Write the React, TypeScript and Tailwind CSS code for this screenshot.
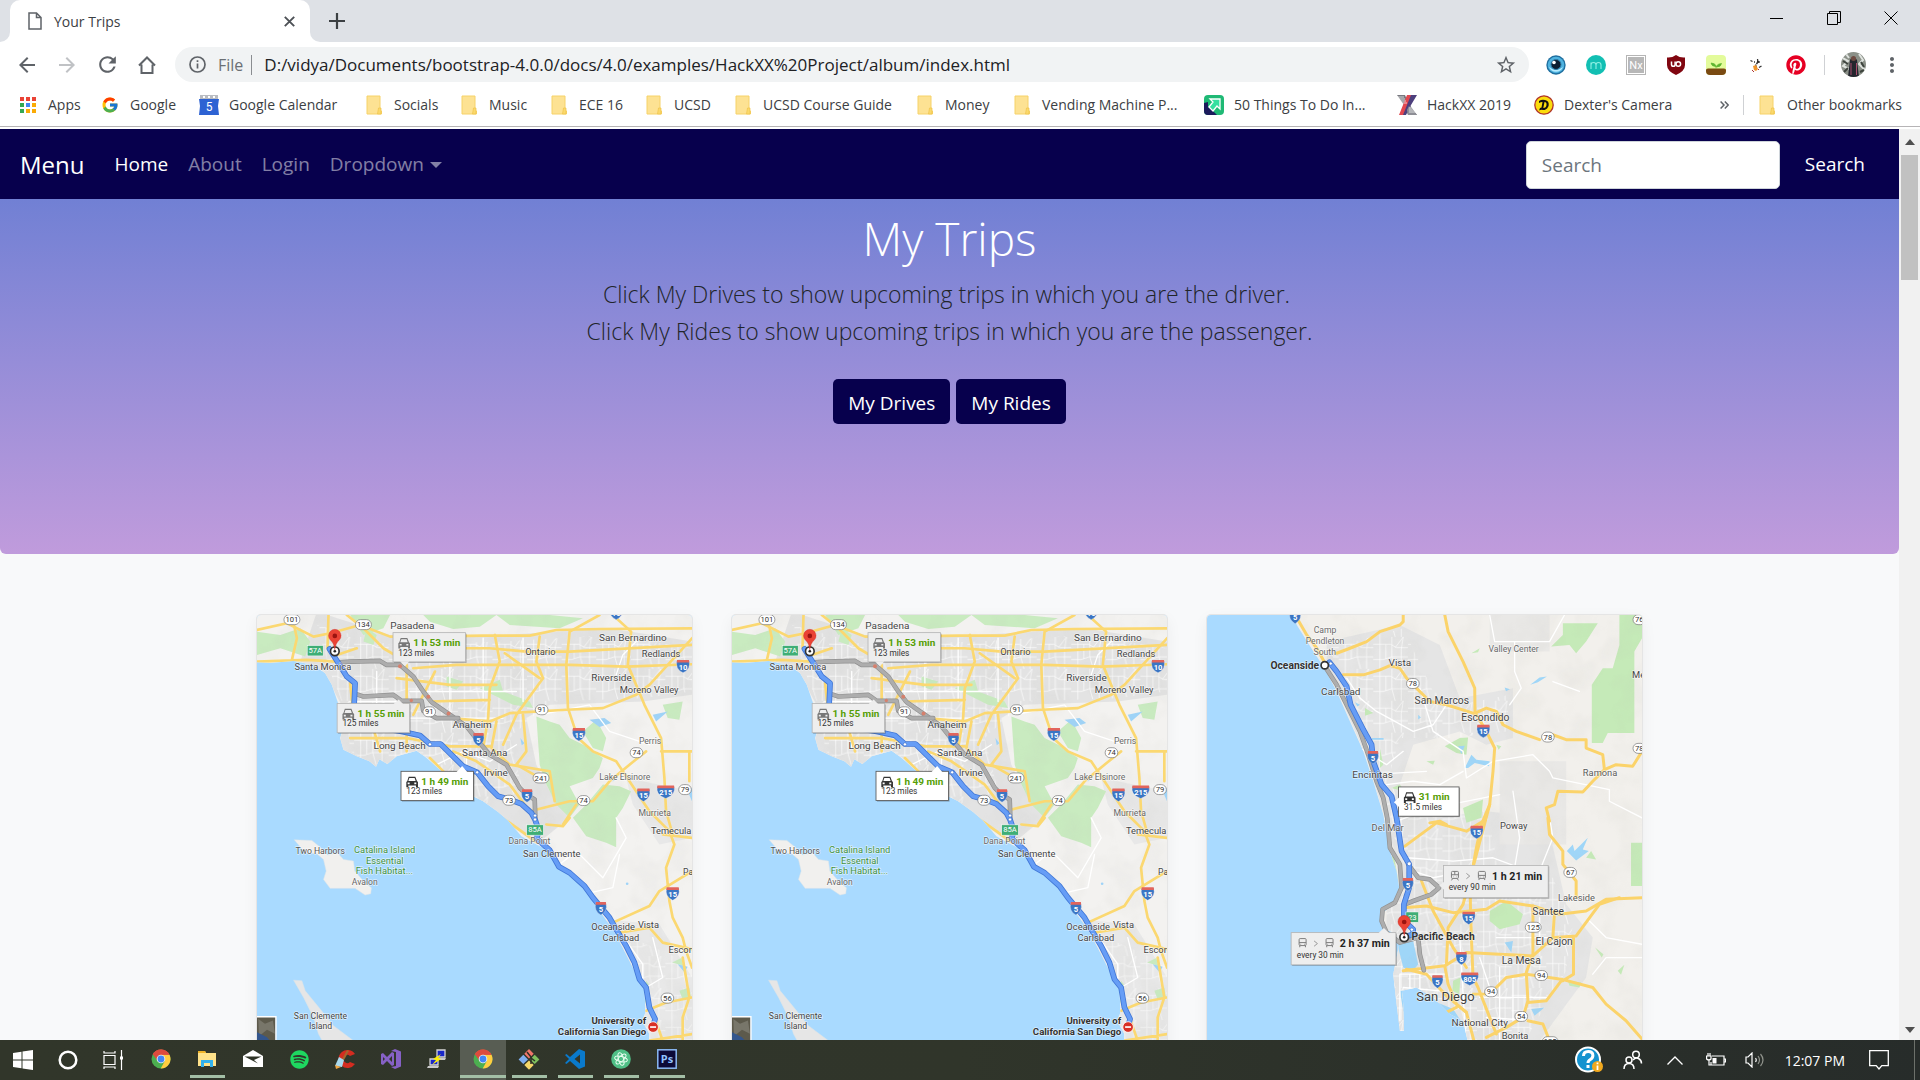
import type { ReactNode } from "react";
import { FcGoogle } from "react-icons/fc";
import { FaPinterest, FaSpotify } from "react-icons/fa";
import { MdArrowBack, MdArrowForward, MdRefresh, MdMoreVert, MdStarBorder } from "react-icons/md";

/* ---------- Browser icons ---------- */

function FolderIcon() {
  return (
    <svg width="20" height="20" viewBox="0 0 20 20" aria-hidden="true">
      <path d="M3 1h13v14l1.5 1v3H3z" fill="#fde293" stroke="#f6d268" strokeWidth="1" />
      <path d="M14.5 13h2.5v6h-3.5z" fill="#fbd96c" stroke="#efc34a" strokeWidth=".7" />
    </svg>
  );
}

function AppsIcon() {
  const colors = ["#ea4335", "#ea4335", "#ea4335", "#34a853", "#4285f4", "#fbab05", "#34a853", "#fbab05", "#fbab05"];
  return (
    <svg width="20" height="20" viewBox="0 0 20 20" aria-hidden="true">
      {colors.map((c, i) => (
        <rect key={i} x={2 + (i % 3) * 6} y={2 + Math.floor(i / 3) * 6} width="4" height="4" fill={c} />
      ))}
    </svg>
  );
}

function CalendarIcon() {
  return (
    <svg width="20" height="20" viewBox="0 0 20 20" aria-hidden="true">
      <path d="M1 0h18v5H1z" fill="#b9bcc2" />
      <path d="M4 1h2v2H4zM9 1h2v2H9zM14 1h2v2h-2z" fill="#fff" />
      <path d="M0 4h20l-1 7 1 9H0l1-9z" fill="#2d62d3" />
      <text x="10" y="16" fontSize="12" fill="#fff" textAnchor="middle" fontFamily="Roboto, sans-serif">5</text>
    </svg>
  );
}

function ThingsIcon() {
  return (
    <svg width="20" height="20" viewBox="0 0 20 20" aria-hidden="true">
      <rect width="20" height="20" rx="4" fill="#1fb975" />
      <path d="M0 8l4-1v5l5 4 4 4H4a4 4 0 0 1-4-4z" fill="#1c1a5c" />
      <path d="M6 4h10v10l-3-3-4 5-4-4 4-5z" fill="#35e0a0" stroke="#fff" strokeWidth="1.3" />
    </svg>
  );
}

function HackIcon() {
  return (
    <svg width="20" height="20" viewBox="0 0 20 20" aria-hidden="true">
      <path d="M0 0h8l4 9 8 11h-9L7 10z" fill="#77787f" />
      <path d="M13 0h7l-6 10-5 10H3l6-10z" fill="#4d3f7d" />
      <path d="M10 0h4L6 20H2z" fill="#e2474f" />
      <path d="M12 11l8 9h-9l-1-5z" fill="#8e8f96" />
      <path d="M0 2h7M1 4h7M2 6h7M3 8h7M12 13h4M12 15h6M12 17h7" stroke="#fff" strokeWidth=".7" />
    </svg>
  );
}

function DexterIcon() {
  return (
    <svg width="20" height="20" viewBox="0 0 20 20" aria-hidden="true">
      <circle cx="10" cy="10" r="9.200" fill="#fbdc0b" stroke="#b0342b" strokeWidth="1.300" />
      <path d="M5 6q3-2 6-1c3 .5 4 2.500 3.700 5S12 15.500 9 15q-2-.5-4 .5l1-2.500 1.500-.5L8.500 7Q7 6.800 5 8zM10.500 7L9.300 13c2 0 3-1 3.200-3s-.5-3-2-3z" fill="#111" fillRule="evenodd" />
    </svg>
  );
}

function ChromeIcon() {
  return (
    <svg width="20" height="20" viewBox="0 0 20 20" aria-hidden="true">
      <circle cx="10" cy="10" r="9.500" fill="#4caf50" />
      <path d="M10 10L1.770 5.250A9.500 9.500 0 0 1 18.230 5.250z" fill="#dd4b3e" />
      <path d="M10 5.700h8.500A9.500 9.500 0 0 1 9.700 19.500l4-7.300z" fill="#ffcd40" />
      <path d="M1.770 5.250A9.500 9.500 0 0 1 18.500 5.700H10L6 11z" fill="#dd4b3e" />
      <circle cx="10" cy="10" r="4.300" fill="#f1f1f1" />
      <circle cx="10" cy="10" r="3.400" fill="#4286f5" />
    </svg>
  );
}

const bookmarks: { label: string; icon: ReactNode; width: string }[] = [
  { label: "Apps", icon: <AppsIcon />, width: "w-[82px]" },
  { label: "Google", icon: <FcGoogle size={18} />, width: "w-[99px]" },
  { label: "Google Calendar", icon: <CalendarIcon />, width: "w-[165px]" },
  { label: "Socials", icon: <FolderIcon />, width: "w-[95px]" },
  { label: "Music", icon: <FolderIcon />, width: "w-[90px]" },
  { label: "ECE 16", icon: <FolderIcon />, width: "w-[95px]" },
  { label: "UCSD", icon: <FolderIcon />, width: "w-[89px]" },
  { label: "UCSD Course Guide", icon: <FolderIcon />, width: "w-[182px]" },
  { label: "Money", icon: <FolderIcon />, width: "w-[97px]" },
  { label: "Vending Machine P...", icon: <FolderIcon />, width: "w-[192px]" },
  { label: "50 Things To Do In...", icon: <ThingsIcon />, width: "w-[193px]" },
  { label: "HackXX 2019", icon: <HackIcon />, width: "w-[137px]" },
  { label: "Dexter's Camera", icon: <DexterIcon />, width: "w-[140px]" },
];

const extensions: { name: string; icon: ReactNode }[] = [
  {
    name: "Eye",
    icon: (
      <svg width="20" height="20" viewBox="0 0 20 20">
        <circle cx="10" cy="10" r="9.700" fill="#1f6f9f" />
        <circle cx="10" cy="10" r="8.300" fill="#4fb3e0" />
        <path d="M3 12a7.500 7.500 0 0 0 14 0q-7 6-14 0z" fill="#b5ecff" />
        <circle cx="10" cy="9.500" r="5" fill="#0c1f33" />
        <circle cx="10" cy="9.500" r="5" fill="none" stroke="#2d7ca8" strokeWidth="1" />
        <circle cx="8" cy="7.500" r="1.800" fill="#fff" />
      </svg>
    ),
  },
  {
    name: "Momentum",
    icon: (
      <svg width="20" height="20" viewBox="0 0 20 20">
        <circle cx="10" cy="10" r="10" fill="#12bfb3" />
        <path d="M5 14V7.500M5 10q0-2.500 2.500-2.500T10 10v4M10 10q0-2.500 2.500-2.500T15 10v4" stroke="#8df0e4" fill="none" strokeWidth="1.100" />
      </svg>
    ),
  },
  {
    name: "Nx",
    icon: (
      <svg width="20" height="20" viewBox="0 0 20 20">
        <rect x=".5" y=".5" width="19" height="19" fill="#fff" stroke="#b5b5b5" />
        <rect x="2" y="2" width="16" height="16" fill="#b7b7b7" />
        <text x="10" y="14" fontSize="11" fill="#fff" textAnchor="middle" fontFamily="Roboto, sans-serif">Nx</text>
      </svg>
    ),
  },
  {
    name: "uBlock",
    icon: (
      <svg width="20" height="20" viewBox="0 0 20 20">
        <path d="M10 0q4 3 9 2.500V10q0 6-9 10Q1 16 1 10V2.500Q6 3 10 0z" fill="#800610" />
        <path d="M5.500 6.500v3q0 1.800 1.800 1.800t1.800-1.800V6.500" stroke="#fff" fill="none" strokeWidth="1.500" />
        <circle cx="12.300" cy="9" r="2.300" stroke="#fff" fill="none" strokeWidth="1.500" />
      </svg>
    ),
  },
  {
    name: "Forest",
    icon: (
      <svg width="20" height="20" viewBox="0 0 20 20">
        <rect width="20" height="20" rx="4" fill="#e3fb9b" />
        <path d="M0 15q0-1.500 2-1.500h16q2 0 2 1.500v1q0 4-4 4H4q-4 0-4-4z" fill="#7a4a12" />
        <path d="M10 13.500V11M10 11.500q-4.500 0-5-3.500 4.500 0 5 3.500zM10.500 12q0-3 5-3.500-.5 3.500-5 3.500z" fill="#5fb531" stroke="#5fb531" strokeWidth=".7" />
      </svg>
    ),
  },
  {
    name: "Fox",
    icon: (
      <svg width="20" height="20" viewBox="0 0 20 20">
        <path d="M4.500 5.500l2 1M11.500 4l.5 3-1.500 2M9.500 9.500l1 4M13 12.500l2.500-1.500M13 6v2M8 7h1" stroke="#333" strokeWidth="1.300" />
        <path d="M7 11l3-1 2 4-2 2-2-1z" fill="#f0952b" />
        <path d="M6 15l2 2M12 14l1 1" stroke="#a33" strokeWidth="1" />
      </svg>
    ),
  },
  { name: "Pinterest", icon: <FaPinterest size={20} color="#e60023" /> },
];

const iconButton = "flex h-10 w-10 shrink-0 items-center justify-center text-[#5f6368]";

function BrowserChrome() {
  return (
    <header className="shrink-0 bg-white">
      <div className="flex h-[42px] items-end bg-[#dee1e6]">
        <div className="h-[10px] w-[10px] bg-white">
          <div className="h-full w-full rounded-br-[10px] bg-[#dee1e6]" />
        </div>
        <div className="flex h-full w-[300px] items-center rounded-t-[10px] bg-white pr-3 pl-[18px]">
          <svg width="14" height="18" viewBox="0 0 14 18" fill="none" stroke="#5f6368" strokeWidth="1.500" aria-hidden="true">
            <path d="M1 1h7.500L13 5.500V17H1zM8.500 1v4.500H13" />
          </svg>
          <span className="ml-3 flex-1 text-[14px] text-[#3c4043]">Your Trips</span>
          <button aria-label="Close tab" className="p-[3px]">
            <svg width="11" height="11" viewBox="0 0 11 11" stroke="#4d5156" strokeWidth="1.900">
              <path d="M.8.8l9.400 9.400M10.200.8L.8 10.200" />
            </svg>
          </button>
        </div>
        <div className="h-[10px] w-[10px] bg-white">
          <div className="h-full w-full rounded-bl-[10px] bg-[#dee1e6]" />
        </div>
        <button aria-label="New tab" className="flex h-full w-[34px] items-center justify-center">
          <svg width="16" height="16" viewBox="0 0 16 16" stroke="#3c4043" strokeWidth="2.200">
            <path d="M8 0v16M0 8h16" />
          </svg>
        </button>
        <div className="mr-px ml-auto flex h-9 self-start">
          <button aria-label="Minimize" className="flex w-[57px] items-center justify-center">
            <svg width="13" height="13" viewBox="0 0 13 13" stroke="#000"><path d="M0 6.500h13" /></svg>
          </button>
          <button aria-label="Restore" className="flex w-[57px] items-center justify-center">
            <svg width="14" height="14" viewBox="0 0 14 14" stroke="#000" fill="none"><path d="M.5 2.500h10v11H.5zM2.500 2.500v-2h11v11h-3" /></svg>
          </button>
          <button aria-label="Close" className="flex w-[57px] items-center justify-center">
            <svg width="14" height="14" viewBox="0 0 14 14" stroke="#000"><path d="M.5.5l13 13M13.500.5l-13 13" /></svg>
          </button>
        </div>
      </div>

      <div className="flex h-[45px] items-center pl-[7px]">
        <button aria-label="Back" className={iconButton}><MdArrowBack size={24} /></button>
        <button aria-label="Forward" className="flex h-10 w-10 shrink-0 items-center justify-center text-[#c0c2c5]"><MdArrowForward size={24} /></button>
        <button aria-label="Reload" className={iconButton}><MdRefresh size={25} /></button>
        <button aria-label="Home" className={iconButton}>
          <svg width="18" height="18" viewBox="0 0 18 18" fill="none" stroke="#5f6368" strokeWidth="2">
            <path d="M1 9.500L9 1.500l8 8M3.500 8.500V17h11V8.500" />
          </svg>
        </button>
        <div className="ml-2 flex h-[35px] flex-1 items-center rounded-full bg-[#f1f3f4] pr-3 pl-[14px]">
          <svg width="17" height="17" viewBox="0 0 17 17" fill="none" stroke="#5f6368" strokeWidth="1.700" aria-hidden="true">
            <circle cx="8.500" cy="8.500" r="7.500" />
            <path d="M8.500 7.500v5M8.500 4.300v1.700" />
          </svg>
          <span className="ml-3 text-[16px] text-[#6b6f74]">File</span>
          <span className="ml-2 h-5 w-px bg-[#8a8d91]" />
          <input aria-label="Address" className="ml-3 min-w-0 flex-1 bg-transparent text-[17px] text-[#202124] outline-none" defaultValue="D:/vidya/Documents/bootstrap-4.0.0/docs/4.0/examples/HackXX%20Project/album/index.html" />
          <button aria-label="Bookmark this page" className="text-[#5f6368]"><MdStarBorder size={22} /></button>
        </div>
        <div className="ml-[7px] flex">
          {extensions.map((e) => (
            <button key={e.name} aria-label={e.name} className={iconButton}>{e.icon}</button>
          ))}
        </div>
        <span className="ml-2 h-5 w-px bg-[#cfd1d4]" />
        <button aria-label="Profile" className="ml-4">
          <svg width="25" height="25" viewBox="0 0 25 25">
            <clipPath id="avatar"><circle cx="12.500" cy="12.500" r="12.500" /></clipPath>
            <g clipPath="url(#avatar)">
              <rect width="25" height="25" fill="#8b9088" />
              <path d="M0 5l7 4-5 5 6 3M18 2l4 6-4 4 6 6M5 2l3 4" stroke="#dfe3df" strokeWidth="2" fill="none" />
              <path d="M2 9l5 3M20 10l3 5M3 20l4-4M19 20l4-2" stroke="#3e443e" strokeWidth="2" />
              <path d="M9 8q3-6 7 0l2 17H7z" fill="#24252e" />
              <circle cx="12.500" cy="6.500" r="2.500" fill="#6f4b42" />
              <path d="M10 11v12M15.500 11v12" stroke="#a84d6d" />
            </g>
          </svg>
        </button>
        <button aria-label="Menu" className="mr-2 ml-[6px] flex w-10 justify-center text-[#5f6368]"><MdMoreVert size={24} /></button>
      </div>

      <nav aria-label="Bookmarks" className="flex h-[40px] items-start border-b border-[#b6b4b6] px-[18px] text-[14px] text-[#3c4043]">
        {bookmarks.map((b) => (
          <a key={b.label} href="#" className={`${b.width} flex h-[35px] shrink-0 items-center gap-[10px] whitespace-nowrap`}>
            <span className="flex w-5 shrink-0 justify-center">{b.icon}</span>
            {b.label}
          </a>
        ))}
        <div className="ml-auto flex h-[35px] items-center">
          <button aria-label="More bookmarks" className="mr-[14px]">
            <svg width="9" height="8" viewBox="0 0 9 8" fill="none" stroke="#5f6368" strokeWidth="1.500"><path d="M.6.5L4 4 .6 7.500M4.800.5L8.200 4 4.800 7.500" /></svg>
          </button>
          <span className="mr-[13px] h-5 w-px bg-[#cfd1d4]" />
          <a href="#" className="flex items-center gap-[10px] whitespace-nowrap"><FolderIcon />Other bookmarks</a>
        </div>
      </nav>
      <div className="h-[2px] bg-white" />
    </header>
  );
}

/* ---------- Map pieces; map units are a third of a CSS pixel ---------- */

type Point = { x: number; y: number };

function Interstate({ x, y, n }: Point & { n: string }) {
  const w = n.length > 2 ? 28 : n.length > 1 ? 21 : 18;
  return (
    <g transform={`translate(${x} ${y})`}>
      <path d={`M${-w + 3} -17H${w - 3}Q${w + 4} 8 0 20Q${-w - 4} 8 ${-w + 3} -17z`} fill="#3a75c4" stroke="#e9eef5" strokeWidth="1" />
      <path d={`M${-w + 3} -19H${w - 3}L${w - 2} -11H${-w + 2}z`} fill="#e2645c" />
      <text y="10" fontSize="23" fontWeight="700" fill="#fff" textAnchor="middle">{n}</text>
    </g>
  );
}

function StateRoute({ x, y, n }: Point & { n: string }) {
  const w = n.length > 2 ? 24 : 19;
  return (
    <g transform={`translate(${x} ${y})`}>
      <rect x={-w} y="-15" width={w * 2} height="30" rx="15" fill="#fff" stroke="#707070" strokeWidth="2" />
      <text y="8" fontSize="23" fill="#333" textAnchor="middle">{n}</text>
    </g>
  );
}

function Place({ x, y, children, size = 28, color = "#454545", bold = false, anchor = "middle" }: Point & { children: string; size?: number; color?: string; bold?: boolean; anchor?: "start" | "middle" | "end" }) {
  return (
    <text x={x} y={y} fontSize={size} fontWeight={bold ? 700 : 400} fill={color} textAnchor={anchor} stroke="#ffffff" strokeOpacity=".6" strokeWidth="4" paintOrder="stroke" strokeLinejoin="round">
      {children}
    </text>
  );
}

function Car({ x, y, color }: Point & { color: string }) {
  return (
    <path
      transform={`translate(${x} ${y})`}
      fill={color}
      fillRule="evenodd"
      d="M7 0h20l5 13 3 3v16h-6v-5H6v5H0V16l3-3zM9 4L6 13h22l-3-9zM4 18v5h6v-5zM24 18v5h6v-5z"
    />
  );
}

function Bus({ x, y, train = false }: Point & { train?: boolean }) {
  return (
    <g transform={`translate(${x} ${y})`} fill="none" stroke="#7d7d7d" strokeWidth="3">
      <rect x="2" y="1" width="21" height="21" rx="3" />
      <path d={train ? "M2 11h21M12 1v10M6 22l-4 6M19 22l4 6M8 17h1M16 17h1" : "M2 13h21M4 22v5M21 22v5M6 18h2M17 18h2"} />
    </g>
  );
}

function Callout({ x, y, w, h, tail, main, children }: Point & { w: number; h: number; tail: string; main?: boolean; children: ReactNode }) {
  return (
    <g>
      <rect x={x + 3} y={y + 3} width={w} height={h} fill="#000" opacity=".28" />
      <rect x={x} y={y} width={w} height={h} fill={main ? "#fff" : "#eeeeee"} stroke={main ? "#555" : "#b5b5b5"} strokeWidth="2.500" />
      <path d={tail} fill={main ? "#fff" : "#eeeeee"} />
      {children}
    </g>
  );
}

function DriveCallout({ x, y, w = 218, tail, main, time, miles }: Point & { w?: number; tail: string; main?: boolean; time: string; miles: string }) {
  return (
    <Callout x={x} y={y} w={w} h={88} tail={tail} main={main}>
      <Car x={x + 16} y={y + 16} color={main ? "#333" : "#777"} />
      <text x={x + 61} y={y + 40} fontSize="30" fontWeight="700" fill="#559e05">{time}</text>
      <text x={x + 16} y={y + 69} fontSize="25" fill="#333">{miles}</text>
    </Callout>
  );
}

function Exit({ x, y, w, n }: Point & { w: number; n: string }) {
  return (
    <g>
      <rect x={x} y={y} width={w} height="31" fill="#3fae76" stroke="#fff" strokeWidth="1.500" />
      <text x={x + w / 2} y={y + 23} fontSize="23" fill="#fff" textAnchor="middle">{n}</text>
    </g>
  );
}

function Pin({ x, y }: Point) {
  return (
    <g transform={`translate(${x} ${y})`}>
      <circle r="13" fill="#fff" stroke="#333" strokeWidth="5" />
      <circle r="4" fill="#222" />
      <path d="M0 -4Q-3 -26 -13 -33A19 19 0 1 1 13 -33Q3 -26 0 -4z" fill="#ea4335" stroke="#c5221f" strokeWidth="1" />
      <circle cy="-46" r="7" fill="#9b1410" />
    </g>
  );
}

function StreetPattern({ id }: { id: string }) {
  return (
    <pattern id={id} width="104" height="96" patternUnits="userSpaceOnUse">
      <path d="M0 22h52l18 10h34M0 68h30l24-8h50M20 0v96M56 0v60l10 36M90 0l-6 38v58M38 22v44M66 32l24-32" stroke="#fff" strokeWidth="2" fill="none" />
    </pattern>
  );
}

function Relief({ id }: { id: string }) {
  return (
    <filter id={id} x="0" y="0" width="100%" height="100%">
      <feTurbulence type="fractalNoise" baseFrequency=".012" numOctaves="3" seed="4" />
      <feColorMatrix values="0 0 0 0 .5  0 0 0 0 .5  0 0 0 0 .45  0 0 0 1.200 -.5" />
    </filter>
  );
}

function RouteLine({ d, kind }: { d: string; kind: "blue" | "gray" }) {
  return (
    <g fill="none" strokeLinejoin="round" strokeLinecap="round">
      <path d={d} stroke={kind === "blue" ? "#4177d6" : "#909090"} strokeWidth={kind === "blue" ? 17 : 14} />
      <path d={d} stroke={kind === "blue" ? "#669df6" : "#adadad"} strokeWidth={kind === "blue" ? 12 : 10} />
    </g>
  );
}

const mapClass = "block aspect-square w-full rounded-t-[4px] bg-[#a9daff]";
const mapFont = "Roboto, 'Open Sans', sans-serif";

function SouthernCaliforniaMap({ id }: { id: string }) {
  const land =
    "M20 172L60 174L130 168L190 180L225 205L245 240L262 290L285 350L270 400L280 435L320 455L358 470L378 486L388 464L412 478L440 455L500 438L530 460L570 495L640 560L700 590L745 622L775 648L815 695L850 715L905 742L925 790L1000 840L1050 920L1090 975L1125 1040L1160 1110L1185 1150L1188 1225L1178 1250L1200 1290L1196 1340H1340V0H0V172z";
  return (
    <svg viewBox="20 30 1308 1308" className={mapClass} fontFamily={mapFont} role="img" aria-label="Route from Santa Monica to San Diego">
      <defs>
        <StreetPattern id={`${id}-streets`} />
        <Relief id={`${id}-relief`} />
        <clipPath id={`${id}-land`}><path d={land} /></clipPath>
      </defs>
      <path d={land} fill="#f3f2f0" />
      <g clipPath={`url(#${id}-land)`}>
        <path d="M200 20L420 90L760 90L1080 70L1328 110V270L1180 290L900 300L830 340L860 480L900 560L960 640L860 720L700 600L520 450L380 490L260 440L290 330L220 200L150 170z" fill="#e3e3e3" />
        <path d="M1130 520L1328 560V700L1230 720L1150 600zM1000 940L1230 960L1328 1120V1340H1180L1190 1160L1100 1000z" fill="#e8e8e8" />
        <path d="M200 60L420 120L760 110L1080 90L1328 130V260L1180 280L900 290L780 400L820 560L700 600L520 450L380 490L300 440L290 330L240 200z" fill={`url(#${id}-streets)`} />
        <path d="M1100 980L1328 1080V1340H1190z" fill={`url(#${id}-streets)`} opacity=".8" />
        <g fill="#c9ebc0">
          <path d="M20 80L90 90L150 70L180 110L165 155L90 130L20 150zM300 30L420 30L400 70L340 90zM520 30L740 30L690 65L610 72L540 50zM740 30L900 30L1000 40L930 70L780 60z" />
          <path d="M860 335L900 350L930 360L960 400L1010 425L1060 460L1050 490L1030 520L960 545L990 600L960 640L920 600L890 540L870 480zM970 640L1010 600L1060 540L1110 545L1145 560L1120 610L1100 640V728L1070 715L1010 695z" />
          <path d="M690 250L750 225L760 260L840 290L850 310L790 300zM1000 380L1040 345L1070 400L1060 440L1030 430zM1240 300L1300 290L1290 345L1255 340z" />
          <path d="M350 70L380 90L370 120L340 110zM590 215l50 15-20 25-30-10zM1268 1075l28-14 6 24zM1290 1160l30-10 5 30-25 6zM1190 1130l8 10-4 70-8-20z" />
        </g>
        <g fill="#9fd3f7"><path d="M1020 345l45-5 20 15-35 12zM1210 330l45-10-35 30zM1085 515l15 8-10 8zM1285 1080l30 8-10 16zM1315 560l13 30v-40zM812 400l12 16-8 6z" /><circle cx="1133" cy="838" r="4" /></g>
        <rect x="20" y="30" width="1308" height="1308" filter={`url(#${id}-relief)`} opacity=".2" />
        <g fill="none" strokeLinejoin="round" strokeLinecap="round">
          <g stroke="#fff" strokeWidth="4">
            <path d="M560 480L640 440L720 470L800 420M930 780L980 740L1060 820L1130 700L1100 640M1000 870L1090 850L1110 750M1130 1010L1180 1080L1180 1160M1210 1000L1240 1120L1190 1150M870 330L1020 300L1080 380L1200 420M1100 210L1120 150L1170 100M700 100V290M600 110V330M820 100V290M480 260H800M300 290H460M450 340H760M420 380V300M380 200V430M650 430V520" />
          </g>
          <g stroke="#fbd871" strokeWidth="8">
            <path d="M20 75L110 55L190 95L240 85L330 60L420 95L520 95L700 92H840L920 75L1050 72L1328 70" />
            <path d="M235 30L232 130M130 55L140 100L125 165M290 30L340 70L400 130L450 160M20 170L170 165L260 170M560 115L640 130H720L830 140H960L1328 120" />
            <path d="M320 130L260 150M350 300L390 440M300 235L310 330M300 400H470L600 425H720M470 180V440M440 220L600 240H740M490 190L620 180H780L960 180L1130 185L1328 178" />
            <path d="M735 90L750 170L720 250L715 340L700 430M870 95L860 170L880 220L800 330L760 420M765 145L870 220M555 200L490 330M540 290L720 285M600 340L720 350L780 325L950 315L1060 310L1160 270L1200 240L1328 100" />
            <path d="M1050 30L960 80L950 180L955 310L985 400L1030 440L1100 470L1140 530L1200 620L1260 680L1275 720L1250 790L1260 890L1270 940L1300 1000L1310 1040L1328 1090" />
            <path d="M1090 30L1145 80L1135 180L1185 300L1235 400L1245 520L1250 620L1270 690M1235 440H1328M1320 440V530M740 350L725 430L780 480L900 500L915 590" />
            <path d="M820 330L830 440L800 480L870 520M610 440L680 470L780 540L840 620M840 620L960 590L1030 590L1080 530L1140 480L1190 440M940 660L980 600" />
            <path d="M540 460L640 560L780 655L860 712M1090 955L1200 905L1230 860L1328 800M1110 985L1200 970L1240 1015L1328 1035M1190 1220L1250 1195L1328 1180M1300 1060L1320 1180L1300 1240V1338M1215 1240L1250 1338M890 660L940 665L960 640M1240 690L1328 700M1200 1310L1328 1290" />
          </g>
        </g>
      </g>
      <g fill="#f1f0ee" stroke="#dce4e8" strokeWidth="1.500">
        <path d="M132 706L185 708L210 728L232 752L262 745L280 765L310 770L314 800L340 830L364 850L362 868L345 872L315 852L240 852L220 825L228 800L220 765L200 748L165 745z" />
        <path d="M130 1128L155 1130L165 1160L210 1215L250 1265L310 1310L350 1338H232L205 1290L190 1240L160 1180z" fill="#e6e6e6" />
      </g>
      <g>
        <path d="M20 1238h56v90H20z" fill="#5d5a4c" />
        <path d="M24 1245l20 14 24-10 6 40-24-12-24 20z" fill="#78766a" /><path d="M20 1285l30 15 26 28H20z" fill="#33568d" />
        <path d="M20 1238h57v80" fill="none" stroke="#fff" strokeWidth="4" />
      </g>

      <RouteLine kind="gray" d="M270 172L300 170L390 168L410 180L450 180L490 215L520 260L545 292L600 330L650 365L690 415L720 450L770 480L810 550L830 570L855 585L857 640" />
      <RouteLine kind="gray" d="M318 268L340 275L430 270L455 288L515 288L520 318L560 340L625 340" />
      <RouteLine kind="blue" d="M238 132L265 175L290 215L315 235L312 300L360 365L455 380L510 392L540 418L572 418L640 485L682 503L715 545L745 575L775 583L815 598L845 625L856 645L868 680L860 702L900 737L928 787L960 805L1005 845L1030 880L1080 940L1100 975L1130 1025L1155 1075L1170 1125L1190 1150L1200 1210L1217 1245L1212 1262" />
      <g fill="#d5806d"><circle cx="450" cy="184" r="6" /><circle cx="535" cy="276" r="6" /><circle cx="596" cy="326" r="6" /><circle cx="484" cy="287" r="5" /></g>
      <g fill="#fff" stroke="#3d6fc9" strokeWidth="2"><circle cx="540" cy="419" r="5" /><circle cx="682" cy="503" r="5" /><circle cx="856" cy="633" r="5" /><circle cx="856" cy="645" r="5" /></g>

      <Place x={487} y={73} size={30}>Pasadena</Place>
      <Place x={1150} y={107} size={30}>San Bernardino</Place>
      <Place x={872} y={151}>Ontario</Place>
      <Place x={1235} y={156}>Redlands</Place>
      <Place x={218} y={195}>Santa Monica</Place>
      <Place x={1086} y={228} size={30}>Riverside</Place>
      <Place x={1199} y={264}>Moreno Valley</Place>
      <Place x={667} y={369} size={30}>Anaheim</Place>
      <Place x={449} y={433} size={30}>Long Beach</Place>
      <Place x={705} y={455} size={30}>Santa Ana</Place>
      <Place x={738} y={514} size={30}>Irvine</Place>
      <Place x={1202} y={417} size={26} color="#686868">Perris</Place>
      <Place x={1126} y={525} size={26} color="#686868">Lake Elsinore</Place>
      <Place x={1216} y={634} size={26} color="#686868">Murrieta</Place>
      <Place x={1326} y={690} anchor="end">Temecula</Place>
      <Place x={839} y={720} size={26} color="#686868">Dana Point</Place>
      <Place x={906} y={758}>San Clemente</Place>
      <Place x={210} y={748} size={26} color="#555">Two Harbors</Place>
      <Place x={344} y={841} size={26} color="#666">Avalon</Place>
      <Place x={404} y={747} color="#3f9142">Catalina Island</Place>
      <Place x={404} y={778} color="#3f9142">Essential</Place>
      <Place x={403} y={809} color="#3f9142">Fish Habitat...</Place>
      <Place x={1091} y={976}>Oceanside</Place>
      <Place x={1197} y={971}>Vista</Place>
      <Place x={1114} y={1011}>Carlsbad</Place>
      <Place x={1257} y={1047} anchor="start">Escon</Place>
      <Place x={1301} y={812} size={26} anchor="start">Pa</Place>
      <Place x={211} y={1246} size={26}>San Clemente</Place>
      <Place x={211} y={1275} size={26}>Island</Place>
      <Place x={1190} y={1260} size={29} bold color="#333" anchor="end">University of</Place>
      <Place x={1190} y={1293} size={29} bold color="#333" anchor="end">California San Diego</Place>

      <StateRoute x={125} y={44} n="101" />
      <StateRoute x={340} y={59} n="134" />
      <StateRoute x={538} y={321} n="91" />
      <StateRoute x={876} y={315} n="91" />
      <StateRoute x={1161} y={444} n="74" />
      <StateRoute x={874} y={520} n="241" />
      <StateRoute x={778} y={587} n="73" />
      <StateRoute x={1002} y={588} n="74" />
      <StateRoute x={1307} y={555} n="79" />
      <StateRoute x={1254} y={1182} n="56" />
      <Interstate x={1100} y={24} n="15" />
      <Interstate x={1301} y={184} n="10" />
      <Interstate x={988} y={389} n="15" />
      <Interstate x={686} y={404} n="5" />
      <Interstate x={832} y={573} n="5" />
      <Interstate x={1182} y={571} n="15" />
      <Interstate x={1249} y={562} n="215" />
      <Interstate x={1270} y={868} n="15" />
      <Interstate x={1054} y={912} n="5" />
      <Exit x={171} y={122} w={48} n="57A" />
      <Exit x={831} y={661} w={50} n="85A" />

      <DriveCallout x={429} y={83} tail="M450 169L465 184L478 169z" time="1 h 53 min" miles="123 miles" />
      <DriveCallout x={261} y={296} tail="M430 298L446 284L460 298z" time="1 h 55 min" miles="125 miles" />
      <DriveCallout main x={453} y={500} tail="M620 502L637 484L652 502z" time="1 h 49 min" miles="123 miles" />
      <Pin x={254} y={139} />
      <circle cx="1211" cy="1269" r="16" fill="#d93025" stroke="#fff" strokeWidth="2.500" />
      <path d="M1202 1269h18" stroke="#fff" strokeWidth="5" />
    </svg>
  );
}

function SanDiegoMap() {
  const land =
    "M270 0L290 60L340 140L370 185L410 260L450 350L490 440L520 530L550 630L570 740L590 800L598 850L575 905L548 925L545 970L580 985L600 1010L590 1060L580 1110L590 1200L600 1280L612 1280L610 1200L606 1160L650 1150L700 1180L750 1230L790 1250L810 1338H1340V0z";
  return (
    <svg viewBox="20 30 1308 1308" className={mapClass} fontFamily={mapFont} role="img" aria-label="Route from Oceanside to Pacific Beach">
      <defs>
        <StreetPattern id="sd-streets" />
        <Relief id="sd-relief" />
        <clipPath id="sd-land"><path d={land} /></clipPath>
      </defs>
      <path d={land} fill="#f2f0ec" />
      <g clipPath="url(#sd-land)">
        <path d="M380 110L600 60L720 120L780 280L940 250L940 400L860 420L780 380L640 420L600 540L700 640L860 620L1040 640L1100 900L1180 1000L1160 1120L1000 1338H560V900L620 860L500 460L380 180z" fill="#e5e5e5" />
        <path d="M870 30H1050V140H870zM900 470H1100V720H900z" fill="#e9e8e6" />
        <path d="M390 130L610 70L700 260L780 300L930 270L920 380L760 400L600 400L560 540L680 600L860 620L900 800L1060 820L1120 960L1100 1100L960 1338H560V900L640 860L500 460z" fill="url(#sd-streets)" />
        <g fill="#c5eab8">
          <path d="M1090 55H1195L1160 110L1130 145L1110 120L1055 125L1090 90zM1260 30H1328V100L1305 140V385H1225L1210 415H1177V240L1210 190H1240L1260 120z" />
          <path d="M735 425L780 400L805 398L800 450L770 445zM790 610L850 585L845 640L800 655zM870 920L920 890L970 930L960 960L900 975L870 950zM575 550L600 540L610 560zM580 740L595 830L590 850L575 760zM1295 715H1328V845H1295zM1105 1130L1145 1135L1140 1150L1110 1145zM1160 760L1175 740L1190 765zM1187 1030l25 20-5 10zM495 310l25 15-25 8zM680 470l25-2-5 12zM890 420l15 5-8 10zM760 1130l22-10-4 50-20-10zM540 430l10 50-10 10zM815 145l25-15-5 12zM1255 1100l20-18-10 30z" />
        </g>
        <g fill="#9fd6f8">
          <path d="M992 240L1020 218L1042 215L1015 232zM1102 740L1120 720L1125 740L1165 700L1150 735L1168 740L1130 768zM592 1020L640 1010L655 1080L640 1100L610 1090L600 1050zM915 1015L940 1010L935 1045zM995 1215L1035 1210L1005 1235zM655 330l8 8-8 6zM915 248l16 5-12 6zM775 425l20-2-10 25zM465 292l15 8-8 5zM516 400h35v5h-35zM985 1085l12 10z" />
          <path d="M795 490L815 450L830 465L870 470L868 485L825 475L805 490zM700 1190L760 1215L790 1260L770 1290L730 1240zM600 1160L650 1160L690 1200L630 1250L610 1220z" />
        </g>
        <rect x="20" y="30" width="1308" height="1308" filter="url(#sd-relief)" opacity=".2" />
        <g fill="none" strokeLinejoin="round" strokeLinecap="round">
          <g stroke="#fff" strokeWidth="4">
            <path d="M870 30L885 110H1050L1095 30M945 110V200L965 250L930 300M440 220L480 280L530 320L640 380L700 360L740 300M660 250L700 380L790 440L800 520L880 470L1000 450L1050 500L1060 520L1230 555V590L1328 640M560 540L640 530L720 540L790 500M590 650L700 610L900 570M930 880L960 700L940 560M1050 640L1060 700L1000 850M1170 950L1220 1000L1328 1020M1180 1110L1220 1060L1328 1060M480 430L560 480L610 440M500 510L680 500M1060 230L1140 260M620 760L760 770L880 760L1040 820M640 800L700 820L800 800M600 1110H740M610 1150L720 1160M890 1000L1100 1000M900 1090V1338M840 1180H1050M860 1240L1000 1250M780 1000L800 1338M600 1110V1250M630 1110V1180M660 1090V1160M840 1060L870 1150M940 1120V1250M1020 940V1000" />
          </g>
          <g stroke="#fbd36a" strokeWidth="9">
            <path d="M285 30L320 90L350 130L375 175M610 30V50L600 60L540 80L500 110L450 130L410 145M430 210H490L540 195L570 182L600 190L620 220L655 255L690 290L740 300L820 325M735 30L745 80L790 170L825 250L826 330" />
            <path d="M826 325L855 370L885 430L880 500L870 600L845 660L830 730L812 830L812 900L815 1000L820 1120L835 1150L870 1240L890 1290" />
            <path d="M826 325L860 310L890 320L910 360L950 380L1020 405M1060 390L1100 405H1160V430L1210 450L1215 495L1180 530L1150 562L1075 560L1065 600L1040 610L1050 650" />
            <path d="M1215 495L1250 480L1300 485L1328 440M1045 640L1050 690L1090 740L1090 780L1130 830V880M615 725L710 655L800 680L850 650M690 655L720 650L740 660M610 910L680 905L760 925L860 915L900 890L1000 905L1080 930L1160 920L1220 885L1328 880" />
            <path d="M665 830L700 920L760 1030L800 1090M610 1100L735 1085L800 1045L900 1050L1000 1055L1060 1000L1065 920M740 1080L745 970L790 900L870 600M735 1085L745 1140L770 1200L800 1225L830 1338" />
            <path d="M620 1095L680 1110L740 1175L800 1225M820 1170L870 1170L920 1120L980 1110L1085 1125L1180 1150L1220 1200L1280 1250L1328 1305M980 1105L985 1190L970 1240L920 1270L860 1300M985 1195L1040 1190L1085 1130M1065 1000L1130 995L1200 900L1260 880M1122 1000V1110L1090 1130M1000 905V1050L980 1105" />
            <path d="M985 1250L1030 1260L1050 1310L1090 1338M700 1210L740 1225L770 1210M700 1220L745 1305L760 1338" />
          </g>
        </g>
      </g>

      <RouteLine kind="gray" d="M378 190L410 240L440 300L480 380L505 450L530 530L550 580L562 640L570 730L600 780L605 850L585 895L548 915L545 950L560 985L600 1015L655 1000L660 1050L672 1098" />
      <RouteLine kind="gray" d="M625 780L655 820L690 825L718 850L695 870L640 890L615 900" />
      <RouteLine kind="blue" d="M388 172L410 200L440 245L452 300L490 375L515 420L520 470L545 540L575 575L590 640L605 740L628 780L628 850L612 900L612 950L640 975L640 990L615 998" />
      <g fill="#fff" stroke="#3d6fc9" strokeWidth="2"><circle cx="392" cy="176" r="5" /><circle cx="628" cy="778" r="6" /><circle cx="636" cy="976" r="5" /></g>

      <Place x={375} y={85} size={26} color="#6b6b6b">Camp</Place>
      <Place x={375} y={117} size={26} color="#6b6b6b">Pendleton</Place>
      <Place x={374} y={149} size={26} color="#6b6b6b">South</Place>
      <Place x={357} y={191} size={31} bold color="#333" anchor="end">Oceanside</Place>
      <Place x={600} y={182} size={30}>Vista</Place>
      <Place x={942} y={141} size={26} color="#686868">Valley Center</Place>
      <Place x={422} y={270} size={30}>Carlsbad</Place>
      <Place x={726} y={299} size={31}>San Marcos</Place>
      <Place x={857} y={350} size={31}>Escondido</Place>
      <Place x={518} y={521} size={30}>Encinitas</Place>
      <Place x={1202} y={515} color="#5c5c5c">Ramona</Place>
      <Place x={1298} y={218} anchor="start">Me</Place>
      <Place x={942} y={672}>Poway</Place>
      <Place x={563} y={680} color="#5c5c5c">Del Mar</Place>
      <Place x={1131} y={890} color="#5c5c5c">Lakeside</Place>
      <Place x={1046} y={932} size={31}>Santee</Place>
      <Place x={1064} y={1023} size={31}>El Cajon</Place>
      <Place x={965} y={1079} size={31}>La Mesa</Place>
      <Place x={737} y={1191} size={39} color="#3e3e3e">San Diego</Place>
      <Place x={840} y={1266} size={30}>National City</Place>
      <Place x={946} y={1304}>Bonita</Place>

      <StateRoute x={639} y={236} n="78" />
      <StateRoute x={1045} y={397} n="78" />
      <StateRoute x={1320} y={44} n="76" />
      <StateRoute x={1320} y={431} n="78" />
      <StateRoute x={1112} y={804} n="67" />
      <StateRoute x={1001} y={969} n="125" />
      <StateRoute x={1025} y={1114} n="94" />
      <StateRoute x={874} y={1163} n="94" />
      <StateRoute x={965} y={1237} n="54" />
      <StateRoute x={1052} y={1313} n="125" />
      <Interstate x={285} y={36} n="5" />
      <Interstate x={851} y={379} n="15" />
      <Interstate x={519} y={458} n="5" />
      <Interstate x={831} y={683} n="15" />
      <Interstate x={624} y={840} n="5" />
      <Interstate x={807} y={941} n="15" />
      <Interstate x={785} y={1062} n="8" />
      <Interstate x={713} y={1132} n="5" />
      <Interstate x={810} y={1124} n="805" />
      <Exit x={618} y={923} w={38} n="23" />

      <DriveCallout main x={596} y={547} w={182} tail="M599 577L582 593L599 609z" time="31 min" miles="31.5 miles" />
      <Callout x={731} y={783} w={315} h={97} tail="M733 832L718 843L733 856z">
        <Bus x={753} y={800} train />
        <path d="M800 807l10 8-10 8" fill="none" stroke="#888" strokeWidth="2.500" />
        <Bus x={834} y={800} />
        <text x="877" y="827" fontSize="32" fontWeight="700" fill="#222">1 h 21 min</text>
        <text x="747" y="858" fontSize="25" fill="#333">every 90 min</text>
      </Callout>
      <Callout x={273} y={985} w={315} h={97} tail="M535 987L552 971L568 987z">
        <Bus x={295} y={1002} />
        <path d="M342 1010l10 8-10 8" fill="none" stroke="#888" strokeWidth="2.500" />
        <Bus x={376} y={1002} />
        <text x="419" y="1029" fontSize="32" fontWeight="700" fill="#222">2 h 37 min</text>
        <text x="290" y="1060" fontSize="25" fill="#333">every 30 min</text>
      </Callout>
      <circle cx="374" cy="181" r="11" fill="#fff" stroke="#333" strokeWidth="5" />
      <Pin x={613} y={999} />
      <Place x={635} y={1008} size={31} bold color="#333" anchor="start">Pacific Beach</Place>
    </svg>
  );
}

/* ---------- Page ---------- */

const primaryButton = "h-[45px] rounded-[5px] bg-[#07004d] px-[15px] pt-[3px] text-[19px] text-white";
const card = "rounded-[5px] border border-black/10 bg-white shadow-[0_5px_15px_rgba(0,0,0,0.05)]";

function Page() {
  return (
    <main className="min-w-0 flex-1 overflow-hidden bg-[#f8f9fa]">
      <nav className="flex h-[70px] items-center bg-[#07004d] pt-px pr-[19px] pl-5">
        <a href="#" className="text-[24px] text-white">Menu</a>
        <div className="ml-[30px] flex flex-1 gap-5 text-[19px] text-white/50">
          <a href="#" className="text-white">Home</a>
          <a href="#">About</a>
          <a href="#">Login</a>
          <a href="#" className="flex items-center gap-[6px]">
            Dropdown
            <svg width="12" height="6" viewBox="0 0 12 6" fill="currentColor" aria-hidden="true"><path d="M0 0h12L6 6z" /></svg>
          </a>
        </div>
        <form className="flex items-center" onSubmit={(e) => e.preventDefault()}>
          <input aria-label="Search" placeholder="Search" className="h-12 w-[254px] rounded-[5px] border border-[#ced4da] bg-white px-[15px] text-[19px] text-[#495057] placeholder:text-[#6c757d]" />
          <button className="ml-[10px] px-[15px] text-[19px] text-white">Search</button>
        </form>
      </nav>

      <section className="h-[355px] rounded-b-[6px] bg-linear-to-b from-[#7180d4] to-[#c09bdc] pt-[9px] text-center">
        <h1 className="text-[46px] leading-[60px] font-light text-white">My Trips</h1>
        <p className="mt-2 text-[23px] leading-[37px] font-light text-[#212529]">
          Click My Drives to show upcoming trips in which you are the driver.&nbsp;
          <br />
          Click My Rides to show upcoming trips in which you are the passenger.
        </p>
        <div className="mt-[29px] flex justify-center gap-[6px]">
          <button className={primaryButton}>My Drives</button>
          <button className={primaryButton}>My Rides</button>
        </div>
      </section>

      <section className="mx-auto mt-[60px] grid max-w-[1387px] grid-cols-3 gap-[38px]">
        <article className={card}><SouthernCaliforniaMap id="trip-one" /></article>
        <article className={card}><SouthernCaliforniaMap id="trip-two" /></article>
        <article className={card}><SanDiegoMap /></article>
      </section>
    </main>
  );
}

function Scrollbar() {
  return (
    <div className="flex w-[21px] shrink-0 flex-col items-center bg-[#f1f1f1]">
      <div className="flex h-[26px] items-center"><svg width="10" height="6" viewBox="0 0 10 6" fill="#505050"><path d="M0 6h10L5 0z" /></svg></div>
      <div className="h-[125px] w-[17px] bg-[#c1c1c1]" />
      <div className="mt-auto flex h-[20px] items-center"><svg width="10" height="6" viewBox="0 0 10 6" fill="#505050"><path d="M0 0h10L5 6z" /></svg></div>
    </div>
  );
}

/* ---------- Taskbar ---------- */

const apps: { name: string; icon: ReactNode; state?: "open" | "active" }[] = [
  { name: "Chrome", icon: <ChromeIcon /> },
  {
    name: "File Explorer",
    state: "open",
    icon: (
      <svg width="20" height="18" viewBox="0 0 20 18">
        <path d="M1 1h7l1 2h10v13H1z" fill="#ffe28a" /><path d="M1 1h7l1 2H1z" fill="#f0b429" />
        <path d="M4 10h12v7h-3v-4H7v4H4z" fill="#32b1ec" />
      </svg>
    ),
  },
  {
    name: "Mail",
    icon: (
      <svg width="20" height="18" viewBox="0 0 20 18"><path d="M0 6L10 0l10 6v11H0z" fill="#fff" /><path d="M1.500 6.500h17L11 10l4 3.500z" fill="#2e3326" /></svg>
    ),
  },
  { name: "Spotify", icon: <FaSpotify size={19} color="#1ed760" /> },
  {
    name: "CCleaner",
    icon: (
      <svg width="20" height="20" viewBox="0 0 20 20">
        <path d="M20 5A9 9 0 1 0 20 15l-5-2a4 4 0 1 1 0-6z" fill="#d42c20" />
        <path d="M12 1l2 1-5 9-2-1z" fill="#a4652d" /><path d="M4 8l5 3-2 7-7-1z" fill="#a9d9ee" /><path d="M0 16l6 2-5 2z" fill="#f0a844" />
      </svg>
    ),
  },
  {
    name: "Visual Studio",
    icon: (
      <svg width="20" height="20" viewBox="0 0 20 20" fill="#8661c5"><path d="M14 0l6 2.500v15L14 20l-4-2 5-1V3L10 2zM0 5l2-1 4 4 5-5 2 1v12l-2 1-5-5-4 4-2-1zM2 8v4l2-2zM11 7l-3 3 3 3z" fillRule="evenodd" /></svg>
    ),
  },
  {
    name: "PuTTY",
    icon: (
      <svg width="20" height="20" viewBox="0 0 20 20">
        <path d="M10 1h8v7h-8zM3 10h8v6H3z" fill="#1927c8" stroke="#d5d5d5" strokeWidth="1.300" /><path d="M10 9h9l-1 2h-8zM1 17h11l-1 2H0z" fill="#c9c9c9" />
        <path d="M14 5l-8 5 3 1-4 5 9-6-3-1z" fill="#fff000" />
      </svg>
    ),
  },
  { name: "Your Trips - Chrome", state: "active", icon: <ChromeIcon /> },
  {
    name: "Git Bash",
    state: "open",
    icon: (
      <svg width="22" height="22" viewBox="0 0 22 22">
        <path d="M11 1l4.700 4.700L11 10.400 6.300 5.700z" fill="#f0766b" /><path d="M5.300 6.700L10 11.400l-4.700 4.700L.6 11.400z" fill="#7eaef0" />
        <path d="M16.700 6.700l4.700 4.700-4.700 4.700-4.700-4.700z" fill="#7fc05e" /><path d="M11 12.400l4.700 4.700L11 21.800l-4.700-4.700z" fill="#f5d76a" />
        <path d="M9 4l4 5v7M13 10l4 3" stroke="#2c2f26" strokeWidth="1.500" fill="none" />
      </svg>
    ),
  },
  {
    name: "Visual Studio Code",
    state: "open",
    icon: (
      <svg width="20" height="20" viewBox="0 0 20 20"><path d="M14 0l6 2.500v15L14 20 5 12l-3.500 3L0 14l4-4-4-4 1.500-1L5 8zM15 5.500L9.500 10l5.500 4.500z" fill="#0a7acc" fillRule="evenodd" /></svg>
    ),
  },
  {
    name: "Atom",
    state: "open",
    icon: (
      <svg width="20" height="20" viewBox="0 0 20 20" fill="none" stroke="#eafff2">
        <circle cx="10" cy="10" r="9.800" fill="#4fbf86" stroke="none" />
        <ellipse cx="10" cy="10" rx="6.500" ry="2.500" transform="rotate(15 10 10)" /><ellipse cx="10" cy="10" rx="6.500" ry="2.500" transform="rotate(75 10 10)" /><ellipse cx="10" cy="10" rx="6.500" ry="2.500" transform="rotate(135 10 10)" />
      </svg>
    ),
  },
  {
    name: "Photoshop",
    state: "open",
    icon: (
      <svg width="20" height="20" viewBox="0 0 20 20">
        <rect x=".8" y=".8" width="18.400" height="18.400" fill="#0c0a38" stroke="#8bb9f5" strokeWidth="1.500" />
        <text x="10" y="14" fontSize="11" fontWeight="700" fill="#8fc3ff" textAnchor="middle" fontFamily="'Open Sans', sans-serif">Ps</text>
      </svg>
    ),
  },
];

function Taskbar() {
  return (
    <footer className="flex h-10 shrink-0 items-stretch bg-linear-to-r from-[#31362a] via-[#30352a] to-[#272c2a] text-white">
      <button aria-label="Start" className="flex w-[45px] items-center justify-center">
        <svg width="20" height="20" viewBox="0 0 20 20" fill="#fff"><path d="M0 3l8.500-1.300v7.800H0zM9.500 1.500L20 0v9.500H9.500zM0 10.500h8.500v7.800L0 17zM9.500 10.500H20V20L9.500 18.500z" /></svg>
      </button>
      <button aria-label="Cortana" className="flex w-[45px] items-center justify-center">
        <svg width="20" height="20" viewBox="0 0 20 20" fill="none" stroke="#fff" strokeWidth="2.500"><circle cx="10" cy="10" r="8.300" /></svg>
      </button>
      <button aria-label="Task view" className="mr-[3px] flex w-[45px] items-center justify-center">
        <svg width="20" height="20" viewBox="0 0 20 20" fill="none" stroke="#fff" strokeWidth="1.200"><path d="M1 5.500h11v9H1zM1 1v2h11V1M1 19v-2h11v2M18.500 0v20" /><path d="M17 6.500h3v3h-3z" fill="#fff" stroke="none" /></svg>
      </button>
      {apps.map((a) => (
        <button key={a.name} aria-label={a.name} className={a.state === "active" ? "flex w-[46px] flex-col items-center bg-[#585d53]" : "flex w-[46px] flex-col items-center"}>
          <span className="flex h-[35px] items-center pt-[3px]">{a.icon}</span>
          {a.state === "open" && <span className="h-[3px] w-[35px] bg-[#a3bfa6]" />}
          {a.state === "active" && <span className="h-[3px] w-full bg-[#a3bfa6]" />}
        </button>
      ))}
      <div className="ml-auto flex items-center">
        <button aria-label="Help" className="flex w-[44px] justify-center">
          <svg width="28" height="28" viewBox="0 0 28 28">
            <circle cx="13" cy="13.500" r="12" fill="#1593cf" stroke="#fff" strokeWidth="2" />
            <path d="M8.500 10q0-4.500 4.700-4.500t4.700 4q0 2.500-2.500 4t-2.400 3.500M13 19v3" stroke="#fff" strokeWidth="3" fill="none" />
            <circle cx="22.500" cy="20.500" r="5.500" fill="#f1a91e" /><path d="M22.500 19.500v4.500M22.500 16.500v1.800" stroke="#fff" strokeWidth="1.800" />
          </svg>
        </button>
        <button aria-label="People" className="flex w-[44px] justify-center">
          <svg width="20" height="20" viewBox="0 0 20 20" fill="none" stroke="#fff" strokeWidth="1.500"><circle cx="13" cy="4.500" r="3.300" /><circle cx="6" cy="10" r="3" /><path d="M1 19q0-5.500 5-5.500t5 5.500M10 10q2.500-3 5.500-1.500 3 1.500 3 5" /></svg>
        </button>
        <button aria-label="Show hidden icons" className="flex w-[41px] justify-center">
          <svg width="16" height="9" viewBox="0 0 16 9" fill="none" stroke="#fff" strokeWidth="1.300"><path d="M.5 8.500L8 1l7.500 7.500" /></svg>
        </button>
        <button aria-label="Battery" className="flex w-[40px] justify-center">
          <svg width="20" height="14" viewBox="0 0 20 14" fill="none" stroke="#fff" strokeWidth="1.200"><path d="M6 3h12v9H5V9M18 6h1.500v3H18M.6 3H5v3q-2.200 2-4.400 0zM2 0v3M4 0v3M3 7v5h2" /><path d="M6.500 5h4v5.500h-4z" fill="#fff" stroke="none" /></svg>
        </button>
        <button aria-label="Volume" className="flex w-[38px] justify-center">
          <svg width="20" height="16" viewBox="0 0 20 16" fill="none" stroke="#fff" strokeWidth="1.200"><path d="M1 5h2l4-4v14l-4-4H1zM10.500 6q1.500 2 0 4" /><path d="M13 4q3 4 0 8M15.500 2q5 6 0 12" stroke="#90938c" /></svg>
        </button>
        <span className="ml-[11px] text-[14px] whitespace-nowrap">12:07 PM</span>
        <button aria-label="Notifications" className="ml-[24px] flex w-5 justify-center">
          <svg width="20" height="20" viewBox="0 0 20 20" fill="none" stroke="#fff" strokeWidth="1.300"><path d="M.7.7h18.600v15h-6.500L10 19l-2.800-3.300H.7z" /></svg>
        </button>
        <span className="mr-[5px] ml-[25px] h-10 w-px bg-[#6c706a]" />
      </div>
    </footer>
  );
}

export default function App() {
  return (
    <div className="flex h-screen flex-col overflow-hidden font-['Open_Sans',sans-serif]">
      <BrowserChrome />
      <div className="flex min-h-0 flex-1">
        <Page />
        <Scrollbar />
      </div>
      <Taskbar />
    </div>
  );
}
